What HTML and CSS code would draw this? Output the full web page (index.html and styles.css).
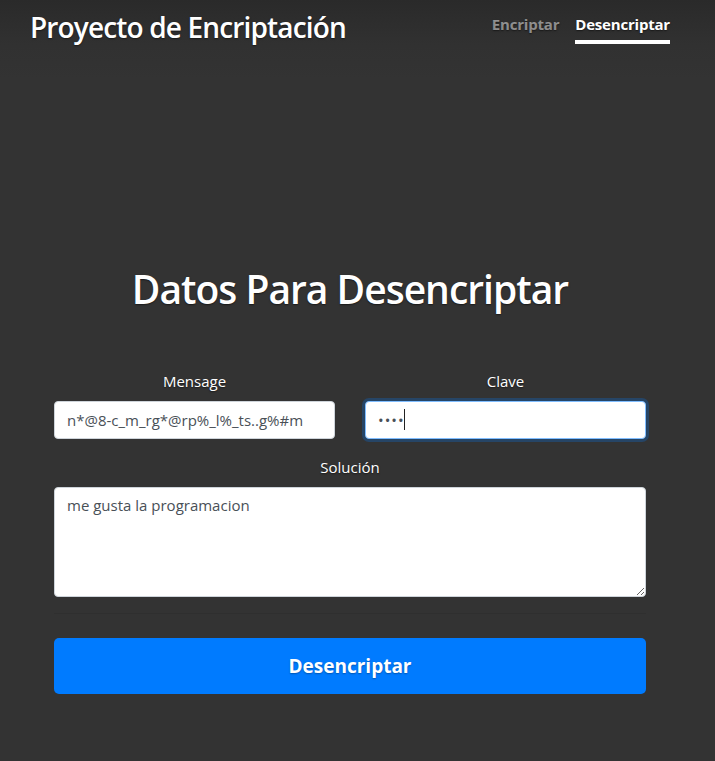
FILE: index.html
```html
<!DOCTYPE html>
<html lang="es">
<head>
<meta charset="utf-8">
<title>Proyecto de Encriptación</title>
<link rel="stylesheet" href="styles.css">
</head>
<body>
<div class="viewport">
  <div class="cover">
    <header class="masthead">
      <h3 class="brand">Proyecto de Encriptación</h3>
      <nav class="nav">
        <a class="nav-link" href="#">Encriptar</a>
        <a class="nav-link active" href="#">Desencriptar</a>
      </nav>
    </header>
    <main class="main">
      <h1 class="title">Datos Para Desencriptar</h1>
      <form class="form">
        <div class="row">
          <div class="group">
            <label class="label" for="msg">Mensage</label>
            <input class="control" id="msg" type="text" value="n*@8-c_m_rg*@rp%_l%_ts..g%#m">
          </div>
          <div class="group">
            <label class="label" for="key">Clave</label>
            <span class="field-wrap">
              <input class="control focused secret" id="key" type="password" value="1234">
              <span class="caret"></span>
            </span>
          </div>
        </div>
        <div class="group">
          <label class="label" for="sol">Solución</label>
          <textarea class="control area" id="sol" rows="4">me gusta la programacion</textarea>
        </div>
        <div class="divider"></div>
        <button class="btn" type="button">Desencriptar</button>
      </form>
    </main>
  </div>
</div>
</body>
</html>
```

FILE: styles.css
```css
html, body {
  margin: 0;
  padding: 0;
}
body {
  width: 715px;
  height: 761px;
  background: linear-gradient(to bottom, #2a2a2a 0px, #313131 45px, #333333 80px, #333333 100%);
  color: #fff;
  font-family: "Open Sans", "Noto Sans", sans-serif;
  font-size: 16px;
  line-height: 1.5;
  text-shadow: 0 0.8px 1.6px rgba(0, 0, 0, 0.5);
}
.viewport {
  width: 700px;
}
.cover {
  width: 640px;
  margin: 0 auto;
  display: flex;
  flex-direction: column;
}
.masthead {
  display: flex;
  justify-content: space-between;
  align-items: flex-start;
  padding-top: 11px;
}
.brand {
  margin: 0;
  font-size: 28px;
  font-weight: 600;
  line-height: 1.2;
  letter-spacing: -0.85px;
}
.nav {
  display: flex;
  gap: 16px;
  margin-top: -2px;
}
.nav-link {
  display: block;
  padding: 4px 0;
  font-weight: 700;
  font-size: 15px;
  color: rgba(255, 255, 255, 0.5);
  text-decoration: none;
  border-bottom: 4px solid transparent;
  letter-spacing: -0.2px;
}
.nav-link.active {
  color: #fff;
  border-bottom-color: #fff;
}
.main {
  display: flex;
  flex-direction: column;
  align-items: stretch;
  padding-top: 221px;
}
.title {
  margin: 0 0 57px;
  text-align: center;
  font-size: 39px;
  font-weight: 600;
  line-height: 1.2;
  letter-spacing: -1px;
}
.form {
  padding: 0 24px;
  display: flex;
  flex-direction: column;
}
.row {
  display: grid;
  grid-template-columns: 1fr 1fr;
  column-gap: 30px;
}
.group {
  display: flex;
  flex-direction: column;
  margin-bottom: 16px;
}
.label {
  text-align: center;
  margin-bottom: 8px;
  font-size: 15px;
  line-height: 24px;
}
.field-wrap {
  position: relative;
  display: block;
}
.control {
  display: block;
  box-sizing: border-box;
  width: 100%;
  height: 38px;
  padding: 6px 12px;
  font-family: "Open Sans", "Noto Sans", sans-serif;
  font-size: 15px;
  line-height: 1.5;
  color: #495057;
  background: #fff;
  border: 1px solid #ced4da;
  border-radius: 4px;
  outline: none;
  text-shadow: none;
  margin: 0;
}
.control.focused {
  border-color: #80bdff;
  box-shadow: 0 0 0 3px rgba(0, 123, 255, 0.25);
}
.secret {
  letter-spacing: 1px;
}
.caret {
  position: absolute;
  left: 39px;
  top: 8px;
  width: 1px;
  height: 21px;
  background: #222;
}
.area {
  height: 110px;
  resize: vertical;
}
.divider {
  height: 1px;
  margin: 0 0 24px;
  background: rgba(0, 0, 0, 0.07);
}
.btn {
  display: block;
  width: 100%;
  height: 56px;
  border: none;
  border-radius: 5px;
  background: #007bff;
  color: #fff;
  font-family: "Open Sans", "Noto Sans", sans-serif;
  font-weight: 700;
  font-size: 19px;
  text-shadow: 0 0.8px 1.6px rgba(0, 0, 0, 0.3);
  cursor: pointer;
}
```
